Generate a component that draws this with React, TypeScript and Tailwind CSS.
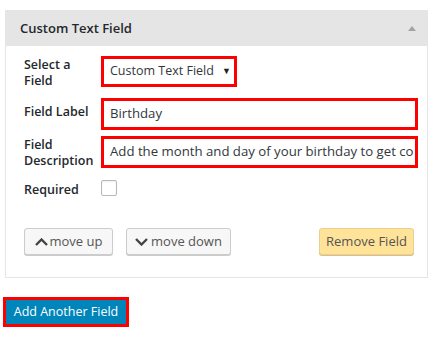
import React from 'react';

// WordPress-style field editor panel
const font = { fontFamily: '"Open Sans", "Noto Sans", sans-serif' };

function ChevronUp() {
    return (
        <svg width="13" height="8" viewBox="0 0 13 8" className="mr-[2px]">
            <path d="M1 7 L6.5 1.5 L12 7" fill="none" stroke="#444" strokeWidth="2.4" />
        </svg>
    );
}

function ChevronDown() {
    return (
        <svg width="13" height="8" viewBox="0 0 13 8" className="mr-[3px]">
            <path d="M1 1 L6.5 6.5 L12 1" fill="none" stroke="#444" strokeWidth="2.4" />
        </svg>
    );
}

export default function App() {
    return (
        <div className="w-[436px] h-[346px] bg-white overflow-hidden" style={font}>
            <div className="ml-[5px] mt-[10px] w-[423px] h-[268px] border border-[#e5e5e5] bg-white">
                {/* Header */}
                <div className="h-[35px] bg-[#e5e5e5] flex items-center justify-between pl-[14px] pr-[11px]">
                    <span className="text-[13px] font-semibold text-[#23282d]">Custom Text Field</span>
                    <span className="w-0 h-0 border-l-[4.5px] border-r-[4.5px] border-b-[5px] border-l-transparent border-r-transparent border-b-[#a0a5aa]" />
                </div>

                {/* Body */}
                <div className="pl-[18px] pr-[9px] pt-[10px] text-[#23282d]">
                    <div className="flex h-[31px]">
                        <div className="w-[77px] pt-[1px] text-[12.5px] font-semibold leading-[16px]">
                            Select a<br />Field
                        </div>
                        <div className="w-[136px] h-[31px] border-[3px] border-[#ff0000] flex items-center pl-[6px] text-[12.5px] text-[#32373c] whitespace-nowrap">
                            <span>Custom Text Field</span>
                            <span className="ml-[8px] text-[9px] leading-none text-[#222] -mt-[2px]">▼</span>
                        </div>
                    </div>

                    <div className="flex h-[32px] mt-[11px]">
                        <div className="w-[77px] pt-[6px] text-[12.5px] font-semibold leading-[16px]">Field Label</div>
                        <div className="flex-1 h-[32px] border-[3px] border-[#ff0000] flex items-center pl-[6px] text-[13.2px] text-[#32373c]">
                            Birthday
                        </div>
                    </div>

                    <div className="flex h-[32px] mt-[6px]">
                        <div className="w-[77px] pt-[1px] text-[12.5px] font-semibold leading-[16px]">
                            Field<br />Description
                        </div>
                        <div className="flex-1 h-[32px] border-[3px] border-[#ff0000] flex items-center pl-[6px] text-[13.2px] text-[#32373c] overflow-hidden whitespace-nowrap">
                            Add the month and day of your birthday to get co
                        </div>
                    </div>

                    <div className="flex h-[16px] mt-[12px]">
                        <div className="w-[77px] pt-[2px] text-[12.5px] font-semibold leading-[15px]">Required</div>
                        <div className="w-[16px] h-[16px] border border-[#b4b9be] rounded-[2px] bg-white shadow-[inset_0_1px_2px_rgba(0,0,0,0.07)]" />
                    </div>

                    <div className="flex items-center mt-[32px] pr-[4px]">
                        <button className="h-[27px] w-[89px] flex items-center justify-center border border-[#ccc] rounded-[3px] bg-[#f7f7f7] shadow-[0_1px_0_#ccc] text-[13px] text-[#555]">
                            <ChevronUp />
                            move up
                        </button>
                        <button className="ml-[13px] h-[27px] w-[105px] flex items-center justify-center border border-[#ccc] rounded-[3px] bg-[#f7f7f7] shadow-[0_1px_0_#ccc] text-[13px] text-[#555]">
                            <ChevronDown />
                            move down
                        </button>
                        <button className="ml-auto h-[27px] w-[95px] flex items-center justify-center border border-[#ebcf8f] rounded-[3px] bg-[#ffe399] shadow-[0_1px_0_#d8c08a] text-[13px] text-[#555]">
                            Remove Field
                        </button>
                    </div>
                </div>
            </div>

            {/* Add another */}
            <div className="ml-[3px] mt-[19px] w-[126px] h-[30px] border-[3px] border-[#ff0000]">
                <button className="w-full h-full bg-[#0085ba] text-white text-[12.5px] flex items-center justify-center">
                    Add Another Field
                </button>
            </div>
        </div>
    );
}
